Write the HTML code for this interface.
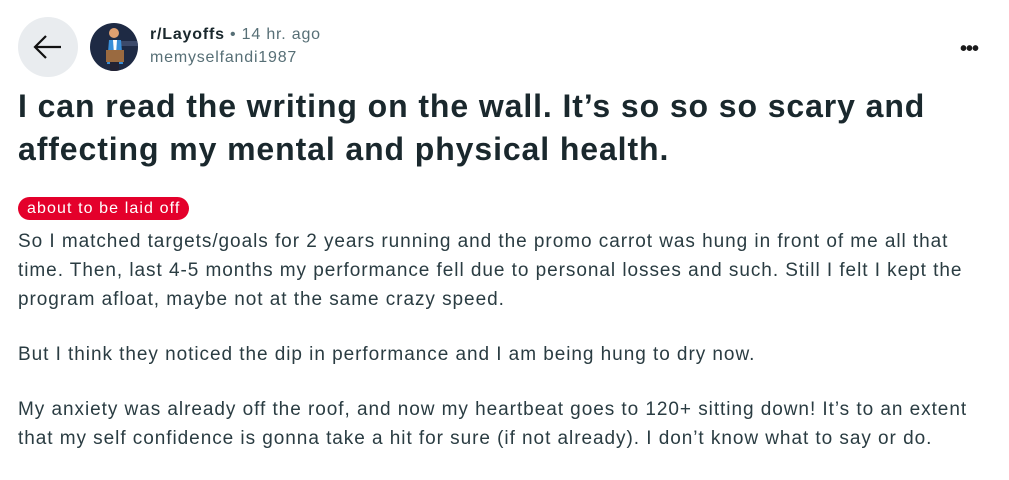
<!DOCTYPE html>
<html><head><style>
body{margin:0;width:1009px;height:480px;background:#fff;font-family:"Liberation Sans",sans-serif;color:#1a1a1b;overflow:hidden;position:relative}
.back{position:absolute;left:18px;top:17px;width:60px;height:60px;border-radius:50%;background:#e9ecef}
.av{position:absolute;left:90px;top:23px;width:48px;height:48px;border-radius:50%;background:#1e2a44;overflow:hidden}
.sub{position:absolute;left:150px;top:26px;font-size:16px;color:#576f76;letter-spacing:0.8px}
.sub b{color:#1a282d}
.user{position:absolute;left:150px;top:49px;font-size:16px;color:#576f76;letter-spacing:0.8px}
.dots{position:absolute;left:960px;top:38px;font-size:20px;font-weight:bold;letter-spacing:-1px}
h1{position:absolute;left:18px;top:85px;margin:0;font-size:32px;line-height:43px;font-weight:bold;color:#1a282d;white-space:nowrap;letter-spacing:0.9px}
.tag{position:absolute;left:18px;top:197px;height:23px;padding:0 9px;border-radius:12px;background:#e4002b;color:#fff;font-size:16px;line-height:23px;letter-spacing:1.1px}
.body{position:absolute;left:18px;top:227px;font-size:19px;line-height:29px;color:#2a3c42;white-space:nowrap;letter-spacing:0.95px}
.body p{margin:0 0 26px}
</style></head><body>
<div class="back"><svg width="60" height="60" viewBox="0 0 60 60"><path d="M43 30H17M28 19L17 30L28 41" stroke="#111" stroke-width="2.2" fill="none"/></svg></div>
<div class="av"><svg width="48" height="48" viewBox="0 0 48 48"><rect x="20" y="18" width="30" height="5" fill="#3c4a6a"/><circle cx="24" cy="10" r="5" fill="#e0a070"/><path d="M19 17h12l2 24h-16z" fill="#3a8fd8"/><path d="M23 17h4l-1 14h-2z" fill="#fff"/><rect x="16" y="27" width="18" height="12" fill="#9a6a40"/><rect x="20" y="39" width="9" height="9" fill="#223"/></svg></div>
<div class="sub"><b>r/Layoffs</b> • 14 hr. ago</div>
<div class="user">memyselfandi1987</div>
<div class="dots">•••</div>
<h1>I can read the writing on the wall. It’s so so so scary and<br>affecting my mental and physical health.</h1>
<div class="tag">about to be laid off</div>
<div class="body">
<p>So I matched targets/goals for 2 years running and the promo carrot was hung in front of me all that<br>time. Then, last 4-5 months my performance fell due to personal losses and such. Still I felt I kept the<br>program afloat, maybe not at the same crazy speed.</p>
<p>But I think they noticed the dip in performance and I am being hung to dry now.</p>
<p>My anxiety was already off the roof, and now my heartbeat goes to 120+ sitting down! It’s to an extent<br>that my self confidence is gonna take a hit for sure (if not already). I don’t know what to say or do.</p>
</div>
</body></html>
